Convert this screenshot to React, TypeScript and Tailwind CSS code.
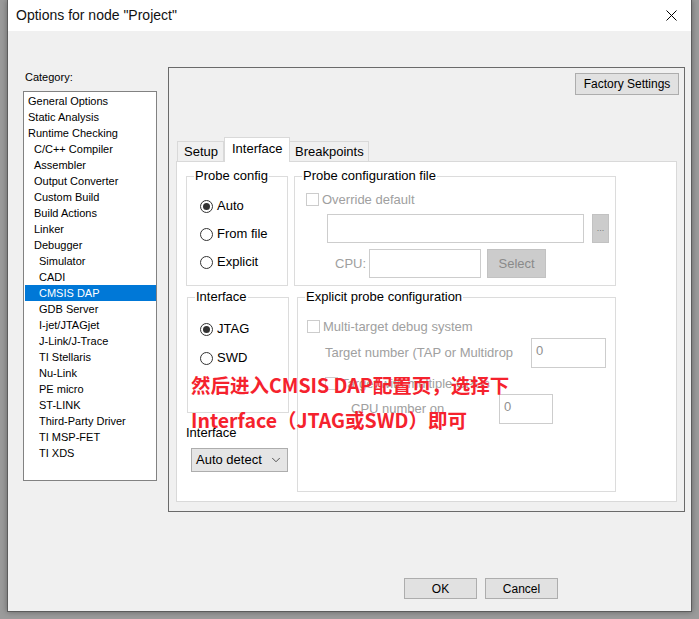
import { ChevronDown } from 'lucide-react';

const categories: { name: string; level: number }[] = [
  { name: 'General Options', level: 0 },
  { name: 'Static Analysis', level: 0 },
  { name: 'Runtime Checking', level: 0 },
  { name: 'C/C++ Compiler', level: 1 },
  { name: 'Assembler', level: 1 },
  { name: 'Output Converter', level: 1 },
  { name: 'Custom Build', level: 1 },
  { name: 'Build Actions', level: 1 },
  { name: 'Linker', level: 1 },
  { name: 'Debugger', level: 1 },
  { name: 'Simulator', level: 2 },
  { name: 'CADI', level: 2 },
  { name: 'CMSIS DAP', level: 2 },
  { name: 'GDB Server', level: 2 },
  { name: 'I-jet/JTAGjet', level: 2 },
  { name: 'J-Link/J-Trace', level: 2 },
  { name: 'TI Stellaris', level: 2 },
  { name: 'Nu-Link', level: 2 },
  { name: 'PE micro', level: 2 },
  { name: 'ST-LINK', level: 2 },
  { name: 'Third-Party Driver', level: 2 },
  { name: 'TI MSP-FET', level: 2 },
  { name: 'TI XDS', level: 2 },
];

const indent = ['pl-[3px]', 'pl-[9px]', 'pl-[14px]'];

function Radio({ label, checked }: { label: string; checked?: boolean }) {
  return (
    <div className="flex items-center h-[14px]">
      <span className="w-[13px] h-[13px] rounded-full border border-[#333] bg-white flex items-center justify-center">
        {checked && <span className="w-[7px] h-[7px] rounded-full bg-[#333]" />}
      </span>
      <span className="ml-[4px] text-[13px] text-black">{label}</span>
    </div>
  );
}

function Check({ label, className = '' }: { label: string; className?: string }) {
  return (
    <div className={`flex items-center h-[13px] ${className}`}>
      <span className="w-[13px] h-[13px] border border-[#cccccc] bg-white" />
      <span className="ml-[3px] text-[13px] text-[#a0a0a0] whitespace-nowrap">{label}</span>
    </div>
  );
}

function Group({ title, className, children }: { title: string; className: string; children?: React.ReactNode }) {
  return (
    <div className={`relative border border-[#dcdcdc] ${className}`}>
      <span className="absolute -top-[9px] left-[7px] px-[1px] bg-white text-[13px] leading-[16px] text-black whitespace-nowrap">
        {title}
      </span>
      {children}
    </div>
  );
}

export default function App() {
  return (
    <div
      className="relative w-[699px] h-[619px] overflow-hidden bg-[#9b9b9b]"
      style={{ fontFamily: '"Liberation Sans", Arial, sans-serif' }}
    >
      <div className="ml-[7px] w-[685px] h-[612px] flex flex-col bg-[#f0f0f0] border border-t-0 border-[#5c5c5c] shadow-[0_0_6px_rgba(0,0,0,0.35)]">
        {/* title bar */}
        <div className="h-[31px] bg-white flex items-center pl-[8px] pr-[14px]">
          <span className="text-[14px] text-[#111]">Options for node "Project"</span>
          <svg className="ml-auto" width="11" height="11" viewBox="0 0 11 11">
            <path d="M0.5 0.5 L10.5 10.5 M10.5 0.5 L0.5 10.5" stroke="#000" strokeWidth="1" />
          </svg>
        </div>

        <div className="flex pl-[15px] pt-[36px]">
          {/* category list */}
          <div className="w-[134px] pt-[3px]">
            <div className="h-[14px] leading-[14px] text-[11px] text-black pl-[2px]">Category:</div>
            <div className="mt-[7px] h-[390px] border border-[#828282] bg-white pt-[1px] pl-[1px]">
              {categories.map((c) => (
                <div
                  key={c.name}
                  className={`h-[16px] leading-[16px] text-[11px] whitespace-nowrap ${indent[c.level]} ${
                    c.name === 'CMSIS DAP' ? 'bg-[#0078d7] text-white' : 'text-black'
                  }`}
                >
                  {c.name}
                </div>
              ))}
            </div>
          </div>

          {/* options panel */}
          <div className="ml-[11px] w-[517px] h-[445px] border border-[#6a6a6a] flex flex-col">
            <div className="flex justify-end pr-[5px] pt-[5px]">
              <button className="w-[104px] h-[22px] bg-[#e1e1e1] border border-[#adadad] text-[12px] text-black">
                Factory Settings
              </button>
            </div>

            <div className="mt-[42px] px-[7px]">
              <div className="flex items-end h-[24px] pl-[1px]">
                <div className="w-[47px] h-[20px] border border-b-0 border-[#d9d9d9] bg-[#f0f0f0] text-[13px] leading-[19px] pl-[6px]">
                  Setup
                </div>
                <div className="relative z-10 -mb-px w-[66px] h-[25px] border border-b-0 border-[#d9d9d9] bg-white text-[13px] leading-[21px] pl-[7px]">
                  Interface
                </div>
                <div className="w-[79px] h-[20px] border border-b-0 border-l-0 border-[#d9d9d9] bg-[#f0f0f0] text-[13px] leading-[19px] pl-[5px]">
                  Breakpoints
                </div>
              </div>

              <div className="w-[501px] h-[341px] border border-[#d9d9d9] bg-white pl-[9px] pt-[14px]">
                {/* row 1 */}
                <div className="flex gap-[6px]">
                  <Group title="Probe config" className="w-[102px] h-[110px]">
                    <div className="flex flex-col gap-[14px] pt-[22px] pl-[13px]">
                      <Radio label="Auto" checked />
                      <Radio label="From file" />
                      <Radio label="Explicit" />
                    </div>
                  </Group>
                  <Group title="Probe configuration file" className="w-[322px] h-[110px]">
                    <Check label="Override default" className="mt-[16px] ml-[11px]" />
                    <div className="flex mt-[8px] pl-[32px]">
                      <div className="w-[257px] h-[29px] border border-[#cdcdcd] bg-white" />
                      <div className="ml-[8px] w-[17px] h-[29px] bg-[#cccccc] border border-[#c2c2c2] flex items-center justify-center text-[9px] text-[#7a7a7a]">
                        ...
                      </div>
                    </div>
                    <div className="flex items-center mt-[6px] pl-[40px]">
                      <span className="text-[13px] text-[#a0a0a0]">CPU:</span>
                      <div className="ml-[3px] w-[112px] h-[29px] border border-[#cdcdcd] bg-white" />
                      <div className="ml-[6px] w-[59px] h-[29px] bg-[#cccccc] border border-[#c2c2c2] flex items-center justify-center text-[13px] text-[#8a8a8a]">
                        Select
                      </div>
                    </div>
                  </Group>
                </div>

                {/* row 2 */}
                <div className="flex mt-[11px]">
                  <div className="ml-[1px] w-[102px]">
                    <Group title="Interface" className="w-[102px] h-[116px]">
                      <div className="flex flex-col gap-[15px] pt-[24px] pl-[12px]">
                        <Radio label="JTAG" checked />
                        <Radio label="SWD" />
                      </div>
                    </Group>
                    <div className="mt-[12px] -ml-[1px] h-[16px] leading-[16px] text-[13px] text-black">Interface</div>
                    <div className="mt-[7px] ml-[4px] w-[97px] h-[24px] bg-[#e5e5e5] border border-[#adadad] flex items-center pl-[4px] pr-[4px]">
                      <span className="text-[13px] text-black">Auto detect</span>
                      <ChevronDown className="ml-auto" size={14} strokeWidth={1.4} color="#333" />
                    </div>
                  </div>

                  <Group title="Explicit probe configuration" className="ml-[8px] w-[319px] h-[195px]">
                    <Check label="Multi-target debug system" className="mt-[22px] ml-[9px]" />
                    <div className="flex items-center justify-between mt-[5px] pl-[27px] pr-[9px]">
                      <span className="text-[13px] text-[#a0a0a0] whitespace-nowrap">Target number (TAP or Multidrop</span>
                      <div className="w-[75px] h-[30px] border border-[#cdcdcd] bg-white text-[13px] text-[#909090] pl-[4px] pt-[2px]">0</div>
                    </div>
                    <Check label="Target with multiple CPUs" className="mt-[9px] ml-[27px]" />
                    <div className="flex items-center mt-[4px] pl-[53px]">
                      <span className="w-[148px] text-[13px] text-[#a0a0a0] whitespace-nowrap">CPU number on</span>
                      <div className="w-[54px] h-[30px] border border-[#cdcdcd] bg-white text-[13px] text-[#909090] pl-[4px] pt-[2px]">0</div>
                    </div>
                  </Group>
                </div>
              </div>
            </div>
          </div>
        </div>

        {/* dialog buttons */}
        <div className="flex mt-auto mb-[12px] pl-[396px] gap-[8px]">
          <button className="w-[73px] h-[21px] bg-[#e1e1e1] border border-[#adadad] text-[12px] text-black">OK</button>
          <button className="w-[73px] h-[21px] bg-[#e1e1e1] border border-[#adadad] text-[12px] text-black">Cancel</button>
        </div>
      </div>

      {/* red annotation */}
      <div
        className="absolute left-[191px] top-[367px] text-[19.5px] leading-[35px] font-bold text-[#f5222d] whitespace-nowrap"
        style={{ fontFamily: '"Noto Sans CJK SC", sans-serif' }}
      >
        <div>然后进入CMSIS DAP配置页，选择下</div>
        <div>Interface（JTAG或SWD）即可</div>
      </div>
    </div>
  );
}
